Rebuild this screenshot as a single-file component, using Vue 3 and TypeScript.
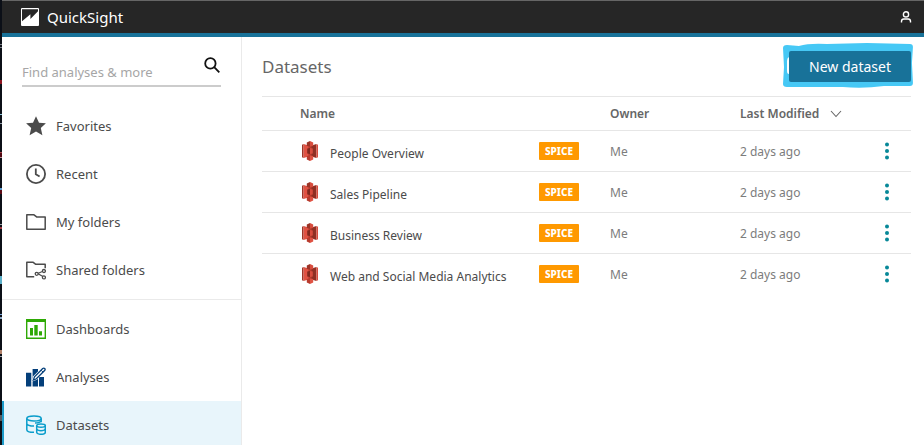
<script setup lang="ts">
import { ref } from 'vue'

interface NavItem {
  id: string
  label: string
}

interface Dataset {
  name: string
  owner: string
  modified: string
}

const libraryItems: NavItem[] = [
  { id: 'favorites', label: 'Favorites' },
  { id: 'recent', label: 'Recent' },
  { id: 'folders', label: 'My folders' },
  { id: 'shared', label: 'Shared folders' },
]

const assetItems: NavItem[] = [
  { id: 'dashboards', label: 'Dashboards' },
  { id: 'analyses', label: 'Analyses' },
  { id: 'datasets', label: 'Datasets' },
]

const groups: NavItem[][] = [libraryItems, assetItems]
const active = ref('datasets')
const query = ref('')

const datasets: Dataset[] = [
  { name: 'People Overview', owner: 'Me', modified: '2 days ago' },
  { name: 'Sales Pipeline', owner: 'Me', modified: '2 days ago' },
  { name: 'Business Review', owner: 'Me', modified: '2 days ago' },
  { name: 'Web and Social Media Analytics', owner: 'Me', modified: '2 days ago' },
]
</script>

<template>
  <div class="frame">
    <div class="edge"></div>
    <div class="app">
      <header class="topbar">
        <a class="brand" href="#">
          <svg width="18" height="18" viewBox="0 0 18 18" aria-hidden="true">
            <rect width="18" height="18" rx="1" fill="#fff" />
            <path d="M1 1.2H17V3.2L9.4 11V6.2L1 13.2Z" fill="#262626" />
          </svg>
          <span>QuickSight</span>
        </a>
        <button class="user" type="button" aria-label="Account">
          <svg width="12" height="12" viewBox="0 0 12 12" fill="none" stroke="#fff" stroke-width="1.4">
            <circle cx="6" cy="3.4" r="2.6" />
            <path d="M1.5 11.5V10.2Q1.5 8 3.8 8H8.2Q10.5 8 10.5 10.2V11.5" />
          </svg>
        </button>
      </header>

      <div class="body">
        <aside class="sidebar">
          <form class="search" @submit.prevent>
            <input v-model="query" type="text" placeholder="Find analyses &amp; more" aria-label="Find analyses &amp; more" />
            <button type="submit" aria-label="Search">
              <svg width="16" height="16" viewBox="0 0 16 16" fill="none" stroke="#111" stroke-width="1.8">
                <circle cx="6.4" cy="6.4" r="5.2" />
                <path d="M10.2 10.2L15.3 15.3" />
              </svg>
            </button>
          </form>

          <nav>
            <ul v-for="(group, g) in groups" :key="g">
              <li v-for="item in group" :key="item.id">
                <a href="#" :class="{ active: active === item.id }" @click.prevent="active = item.id">
                  <svg v-if="item.id === 'favorites'" width="20" height="20" viewBox="0 0 20 20">
                    <path d="M10 .3L13 6.7L19.9 7.3L14.8 12.1L16.4 19.2L10 15.6L3.6 19.2L5.2 12.1L.1 7.3L7 6.7Z" fill="#4b4b4b" />
                  </svg>
                  <svg v-else-if="item.id === 'recent'" width="20" height="20" viewBox="0 0 20 20" fill="none" stroke="#4b4b4b">
                    <circle cx="10" cy="10" r="9.1" stroke-width="1.8" />
                    <path d="M9.8 4.5V10.2L13.6 12.6" stroke-width="1.8" />
                  </svg>
                  <svg v-else-if="item.id === 'folders'" width="20" height="20" viewBox="0 0 20 20" fill="none" stroke="#4b4b4b" stroke-width="1.5">
                    <path d="M.8 2.8H8L10.6 4.9H19.2V17.2H.8Z" stroke-linejoin="round" />
                  </svg>
                  <svg v-else-if="item.id === 'shared'" width="20" height="20" viewBox="0 0 20 20" fill="none" stroke="#4b4b4b">
                    <path d="M8.2 16.7H.8V2.3H7.2L9.8 4.3H19.2V8.2" stroke-width="1.5" stroke-linejoin="round" />
                    <path d="M16.9 11.3L11.7 13.5L16.9 16.6" stroke-width="1.2" />
                    <g stroke-width="1.3" fill="#fff">
                      <circle cx="17.9" cy="11" r="1.5" />
                      <circle cx="10.7" cy="13.8" r="1.5" />
                      <circle cx="17.9" cy="17.4" r="1.5" />
                    </g>
                  </svg>
                  <svg v-else-if="item.id === 'dashboards'" width="20" height="20" viewBox="0 0 20 20">
                    <path d="M0 0H20V20H0ZM1.4 3V18.6H18.6V3Z" fill="#2ea905" fill-rule="evenodd" />
                    <path d="M4 9H7V16.5H4ZM8.3 6H11.7V16.5H8.3ZM13 12.3H16V16.5H13Z" fill="#2ea905" />
                  </svg>
                  <svg v-else-if="item.id === 'analyses'" width="20" height="20" viewBox="0 0 20 20">
                    <path d="M0 5.7H5.3V19.5H0ZM6.6 2H12V19.5H6.6ZM13 10H18V19.5H13Z" fill="#043f7a" />
                    <path d="M5.6 14.8L7.2 9.2L15.9.6Q17.7-.8 19.4.8Q21 2.6 19.3 4.4L10.9 12.8Z" fill="#fff" />
                    <path d="M7.3 13.1L8.5 9.8L16.7 1.6Q17.8.7 18.7 1.5Q19.6 2.5 18.6 3.5L10.4 11.8Z" fill="#fff" stroke="#043f7a" stroke-width="1.3" />
                    <path d="M15.1 3.2L17 5.1" stroke="#043f7a" />
                  </svg>
                  <svg v-else width="20" height="20" viewBox="0 0 20 20" fill="none" stroke="#0a9dcb" stroke-width="1.5">
                    <ellipse cx="8" cy="3.4" rx="7.2" ry="2.5" />
                    <path d="M.8 3.4V14.7Q.8 17.3 8 17.3M.8 8.7Q1.5 11 8 11M15.2 3.4V7.3M15.2 5.8Q14 7.8 9 8" />
                    <ellipse cx="15" cy="10.6" rx="4.3" ry="1.7" />
                    <path d="M10.7 10.6V17.3Q10.9 19.3 15 19.3T19.3 17.3V10.6M10.7 14Q11.5 15.7 15 15.7T19.3 14" />
                  </svg>
                  <span>{{ item.label }}</span>
                </a>
              </li>
            </ul>
          </nav>
        </aside>

        <main>
          <div class="heading">
            <h1>Datasets</h1>
            <div class="cta">
              <svg class="marker" viewBox="0 0 130 46" preserveAspectRatio="none" aria-hidden="true">
                <path d="M0 5Q0 2 4 2L16 3Q26 0 44 1L84 0L127 1Q130 1 130 4L129 20L130 40Q130 43 127 43L101 43Q80 46 60 44L4 44Q0 44 0 41L1 24Z" fill="#46c8f5" />
                <path d="M6 14Q4 15 4 18V28Q4 31 6 31Z" fill="#fff" />
              </svg>
              <button type="button">New dataset</button>
            </div>
          </div>

          <table>
            <colgroup>
              <col class="c-name" />
              <col class="c-type" />
              <col class="c-owner" />
              <col />
              <col class="c-menu" />
            </colgroup>
            <thead>
              <tr>
                <th class="name">Name</th>
                <th></th>
                <th>Owner</th>
                <th>
                  <button class="sort" type="button">
                    Last Modified
                    <svg width="12" height="8" viewBox="0 0 12 8" fill="none" stroke="#666" stroke-width="1.1" aria-hidden="true">
                      <path d="M1 1L6 6.5L11 1" />
                    </svg>
                  </button>
                </th>
                <th></th>
              </tr>
            </thead>
            <tbody>
              <tr v-for="row in datasets" :key="row.name">
                <td class="name">
                  <a href="#" @click.prevent>
                    <svg width="18" height="20" viewBox="0 0 18 20" aria-hidden="true">
                      <path d="M6 3.6H12V16.4H6Z" fill="#b83a2d" />
                      <path d="M1 3.8L2.6 3V17L1 16.2Z" fill="#9b3427" />
                      <path d="M2.6 3L7.4 4.6V15.4L2.6 17Z" fill="#e05243" />
                      <path d="M10.6 4.6L15.4 3V17L10.6 15.4Z" fill="#8f3024" />
                      <path d="M15.4 3L17 3.8V16.2L15.4 17Z" fill="#d84c3d" />
                      <path d="M9 0L5.8 1.6V5L9 5.6Z" fill="#9b3427" />
                      <path d="M9 0L12.2 1.6V5L9 5.6Z" fill="#d84c3d" />
                      <path d="M9 20L5.8 18.4V15L9 14.4Z" fill="#b83a2d" />
                      <path d="M9 20L12.2 18.4V15L9 14.4Z" fill="#e05243" />
                      <path d="M9 7L6.2 7.5V12.5L9 13Z" fill="#80281e" />
                      <path d="M9 7L11.8 7.5V12.5L9 13Z" fill="#d84c3d" />
                    </svg>
                    <span>{{ row.name }}</span>
                  </a>
                </td>
                <td><span class="badge">SPICE</span></td>
                <td>{{ row.owner }}</td>
                <td>{{ row.modified }}</td>
                <td>
                  <button class="more" type="button" :aria-label="'Actions for ' + row.name">
                    <svg width="4" height="18" viewBox="0 0 4 18" fill="#078898">
                      <circle cx="2" cy="2.5" r="2" />
                      <circle cx="2" cy="9" r="2" />
                      <circle cx="2" cy="15.5" r="2" />
                    </svg>
                  </button>
                </td>
              </tr>
            </tbody>
          </table>
        </main>
      </div>
    </div>
  </div>
</template>

<style>
body {
  overflow: hidden;
  background: #fff;
}
</style>

<style scoped>
.frame {
  display: flex;
  height: 100vh;
  font-family: "Noto Sans", "Open Sans", sans-serif;
  font-size: 13px;
  color: #4b4b4b;
}

.edge {
  flex: none;
  width: 2px;
  background: linear-gradient(
    #0b0f17 44px, #7b8088 44px 45px, #0b0f17 45px 47px, #7b8088 47px 48px,
    #0b0f17 48px 80px, #8c1420 80px 84px, #0b0f17 84px 114px, #8ec6dc 114px 115px,
    #0b0f17 115px 123px, #8d99a5 123px 124px, #0b0f17 124px 152px, #a9444c 152px 153px,
    #500812 153px 157px, #b98e98 157px 158px, #0b0f17 158px 188px, #5b9bd0 188px 190px,
    #5a0b15 190px 194px, #0b0f17 194px 224px, #9aa1a8 224px 225px, #0b0f17 225px 227px,
    #9e3640 227px 229px, #0b0f17 229px 276px, #5aaec8 276px 284px, #0b0f17 284px 314px,
    #78a7dd 314px 315px, #0b0f17 315px 317px, #8aa7c4 317px 319px, #0b0f17 319px 350px,
    #b08068 350px 354px, #0b0f17 354px 356px, #a0a5ac 356px 357px, #0b0f17 357px 415px,
    #555a60 415px 421px, #0b0f17 421px
  );
}

.app {
  flex: 1;
  min-width: 0;
  display: flex;
  flex-direction: column;
}

button {
  font: inherit;
  border: 0;
  padding: 0;
  background: none;
  color: inherit;
  cursor: pointer;
}

svg {
  display: block;
  flex: none;
}

a {
  color: inherit;
  text-decoration: none;
}

.topbar {
  flex: none;
  box-sizing: border-box;
  height: 37px;
  display: flex;
  align-items: center;
  justify-content: space-between;
  padding: 0 12px 0 19px;
  background: #262626;
  border-top: 1px solid #666;
  border-bottom: 4px solid #187299;
}

.brand {
  display: flex;
  align-items: center;
  gap: 8px;
  color: #fff;
  font-size: 15px;
}

.body {
  flex: 1;
  min-height: 0;
  display: flex;
}

.sidebar {
  flex: none;
  box-sizing: border-box;
  width: 240px;
  border-right: 1px solid #eaeaea;
}

.search {
  display: flex;
  align-items: center;
  height: 34px;
  margin: 14px 20px 15px;
  border-bottom: 2px solid #ccc;
}

.search input {
  flex: 1;
  min-width: 0;
  height: 34px;
  box-sizing: border-box;
  padding: 8px 0 0;
  border: 0;
  outline: 0;
  background: none;
  font: inherit;
}

.search input::placeholder {
  color: #a6a6a6;
  opacity: 1;
}

.search button {
  padding: 0 1px 6px;
}

ul {
  margin: 0;
  padding: 0;
  list-style: none;
}

ul + ul {
  margin-top: 5px;
  padding-top: 5px;
  border-top: 1px solid #eaeaea;
}

li a {
  box-sizing: border-box;
  height: 48px;
  display: flex;
  align-items: center;
  gap: 10px;
  padding: 0 24px;
}

li a.active {
  padding-left: 22px;
  border-left: 2px solid #1d9bc9;
  background: #e8f5fb;
}

main {
  flex: 1;
  min-width: 0;
  padding: 0 13px 0 20px;
}

.heading {
  box-sizing: border-box;
  height: 60px;
  display: flex;
  align-items: center;
  justify-content: space-between;
  border-bottom: 1px solid #e6e6e6;
}

h1 {
  margin: 0;
  font-size: 17px;
  font-weight: 400;
  color: #666;
}

.cta {
  position: relative;
}

.cta button {
  position: relative;
  display: block;
  height: 31px;
  padding: 0 20px;
  border-radius: 2px;
  background: #187299;
  color: #fff;
  font-size: 14px;
}

.marker {
  position: absolute;
  top: -8px;
  left: -6px;
  width: calc(100% + 8px);
  height: 46px;
}

table {
  width: 100%;
  table-layout: fixed;
  border-collapse: separate;
  border-spacing: 0;
}

.c-name {
  width: 277px;
}

.c-type {
  width: 71px;
}

.c-owner {
  width: 130px;
}

.c-menu {
  width: 26px;
}

th,
td {
  box-sizing: border-box;
  padding: 0;
  text-align: left;
  vertical-align: middle;
  border-bottom: 1px solid #e6e6e6;
}

th {
  height: 34px;
  font-size: 12px;
  font-weight: 600;
  color: #666;
}

td {
  height: 41px;
  font-size: 12px;
  color: #7c7c7c;
}

tbody tr:last-child td {
  border-bottom-color: transparent;
}

th.name,
td.name {
  padding-left: 38px;
}

td.name a {
  display: flex;
  align-items: center;
  gap: 11px;
  padding-left: 1px;
  color: #4b4b4b;
}

td.name span {
  padding-top: 5px;
}

.sort {
  display: flex;
  align-items: center;
  gap: 11px;
}

.more {
  display: block;
}

.badge {
  display: block;
  width: 40px;
  height: 18px;
  line-height: 18px;
  border-radius: 1px;
  background: #ff9900;
  color: #fff;
  font-size: 10px;
  font-weight: 800;
  text-align: center;
}
</style>
